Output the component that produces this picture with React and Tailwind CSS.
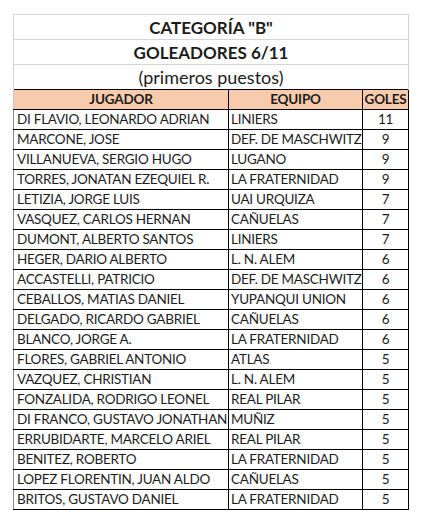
const rows = [
  ['DI FLAVIO, LEONARDO ADRIAN', 'LINIERS', 11],
  ['MARCONE, JOSE', 'DEF. DE MASCHWITZ', 9],
  ['VILLANUEVA, SERGIO HUGO', 'LUGANO', 9],
  ['TORRES, JONATAN EZEQUIEL R.', 'LA FRATERNIDAD', 9],
  ['LETIZIA, JORGE LUIS', 'UAI URQUIZA', 7],
  ['VASQUEZ, CARLOS HERNAN', 'CAÑUELAS', 7],
  ['DUMONT, ALBERTO SANTOS', 'LINIERS', 7],
  ['HEGER, DARIO ALBERTO', 'L. N. ALEM', 6],
  ['ACCASTELLI, PATRICIO', 'DEF. DE MASCHWITZ', 6],
  ['CEBALLOS, MATIAS DANIEL', 'YUPANQUI UNION', 6],
  ['DELGADO, RICARDO GABRIEL', 'CAÑUELAS', 6],
  ['BLANCO, JORGE A.', 'LA FRATERNIDAD', 6],
  ['FLORES, GABRIEL ANTONIO', 'ATLAS', 5],
  ['VAZQUEZ, CHRISTIAN', 'L. N. ALEM', 5],
  ['FONZALIDA, RODRIGO LEONEL', 'REAL PILAR', 5],
  ['DI FRANCO, GUSTAVO JONATHAN', 'MUÑIZ', 5],
  ['ERRUBIDARTE, MARCELO ARIEL', 'REAL PILAR', 5],
  ['BENITEZ, ROBERTO', 'LA FRATERNIDAD', 5],
  ['LOPEZ FLORENTIN, JUAN ALDO', 'CAÑUELAS', 5],
  ['BRITOS, GUSTAVO DANIEL', 'LA FRATERNIDAD', 5],
]

export default function App() {
  return (
    <div className="w-[430px] h-[529px] bg-white pl-[13px] pt-[14px] font-['Lato',sans-serif] text-[#1c1c1c]">
      <table className="border-collapse table-fixed w-[395px]">
        <colgroup>
          <col className="w-[215px]" />
          <col className="w-[134px]" />
          <col className="w-[46px]" />
        </colgroup>
        <tbody>
          <tr className="h-[25px]">
            <td colSpan={3} className="border border-[#d4d4d4] text-center text-[17px] font-bold leading-none p-0 pt-[1px]">
              CATEGORÍA "B"
            </td>
          </tr>
          <tr className="h-[25px]">
            <td colSpan={3} className="border border-[#d4d4d4] text-center text-[17px] font-bold leading-none p-0 pt-[1px]">
              GOLEADORES 6/11
            </td>
          </tr>
          <tr className="h-[25px]">
            <td colSpan={3} className="border-x border-[#d4d4d4] text-center text-[18px] leading-none p-0">
              (primeros puestos)
            </td>
          </tr>
          <tr className="h-[20px] bg-[#f8cbad] text-[13.5px] font-bold leading-none tracking-[-0.2px]">
            <td className="border border-black border-l-[#c8c8c8] text-center p-0">JUGADOR</td>
            <td className="border border-black text-center p-0">EQUIPO</td>
            <td className="border border-black text-center p-0">GOLES</td>
          </tr>
          {rows.map(([name, team, goals]) => (
            <tr key={name} className="h-[20px] text-[13.5px] leading-none tracking-[-0.25px]">
              <td className="border border-black border-l-[#8a8a8a] px-[3px] py-0 whitespace-nowrap overflow-hidden">{name}</td>
              <td className="border border-black px-[2px] py-0 whitespace-nowrap overflow-hidden">{team}</td>
              <td className="border border-black text-center p-0">{goals}</td>
            </tr>
          ))}
        </tbody>
      </table>
    </div>
  )
}
